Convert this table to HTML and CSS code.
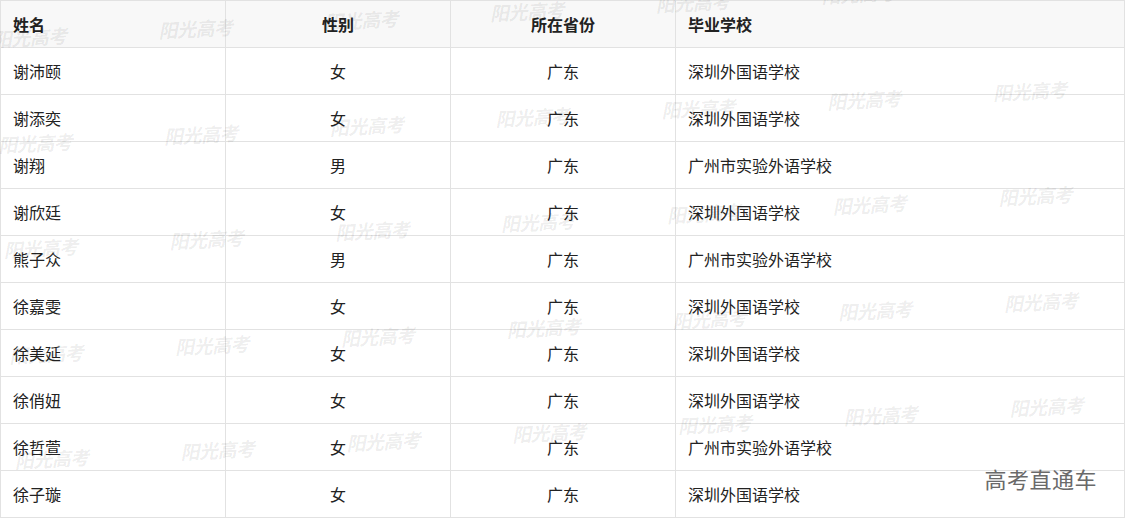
FILE: index.html
```html
<!DOCTYPE html>
<html lang="zh-CN">
<head>
<meta charset="utf-8">
<title>名单</title>
<link rel="stylesheet" href="styles.css">
</head>
<body>
<div class="page">
  <table class="roster">
    <colgroup>
      <col class="c-name">
      <col class="c-sex">
      <col class="c-prov">
      <col class="c-school">
    </colgroup>
    <thead>
      <tr><th class="left">姓名</th><th>性别</th><th>所在省份</th><th class="left">毕业学校</th></tr>
    </thead>
    <tbody>
      <tr><td class="left">谢沛颐</td><td>女</td><td>广东</td><td class="left">深圳外国语学校</td></tr>
      <tr><td class="left">谢添奕</td><td>女</td><td>广东</td><td class="left">深圳外国语学校</td></tr>
      <tr><td class="left">谢翔</td><td>男</td><td>广东</td><td class="left">广州市实验外语学校</td></tr>
      <tr><td class="left">谢欣廷</td><td>女</td><td>广东</td><td class="left">深圳外国语学校</td></tr>
      <tr><td class="left">熊子众</td><td>男</td><td>广东</td><td class="left">广州市实验外语学校</td></tr>
      <tr><td class="left">徐嘉雯</td><td>女</td><td>广东</td><td class="left">深圳外国语学校</td></tr>
      <tr><td class="left">徐美延</td><td>女</td><td>广东</td><td class="left">深圳外国语学校</td></tr>
      <tr><td class="left">徐俏妞</td><td>女</td><td>广东</td><td class="left">深圳外国语学校</td></tr>
      <tr><td class="left">徐哲萱</td><td>女</td><td>广东</td><td class="left">广州市实验外语学校</td></tr>
      <tr><td class="left">徐子璇</td><td>女</td><td>广东</td><td class="left">深圳外国语学校</td></tr>
    </tbody>
  </table>

  <div class="watermarks" aria-hidden="true">
    <span>阳光高考</span><span>阳光高考</span><span>阳光高考</span><span>阳光高考</span><span>阳光高考</span><span>阳光高考</span><span>阳光高考</span>
    <span>阳光高考</span><span>阳光高考</span><span>阳光高考</span><span>阳光高考</span><span>阳光高考</span><span>阳光高考</span><span>阳光高考</span>
    <span>阳光高考</span><span>阳光高考</span><span>阳光高考</span><span>阳光高考</span><span>阳光高考</span><span>阳光高考</span><span>阳光高考</span>
    <span>阳光高考</span><span>阳光高考</span><span>阳光高考</span><span>阳光高考</span><span>阳光高考</span><span>阳光高考</span><span>阳光高考</span>
    <span>阳光高考</span><span>阳光高考</span><span>阳光高考</span><span>阳光高考</span><span>阳光高考</span><span>阳光高考</span><span>阳光高考</span>
  </div>

  <div class="brand">高考直通车</div>
</div>
</body>
</html>
```

FILE: styles.css
```css
html, body {
  margin: 0;
  padding: 0;
  background: #ffffff;
}

.page {
  position: relative;
  width: 1125px;
  height: 518px;
  overflow: hidden;
  font-family: "Noto Sans CJK SC", "Noto Sans", sans-serif;
}

.roster {
  border-collapse: collapse;
  table-layout: fixed;
  width: 1124px;
  font-size: 16px;
  color: #222;
}

.c-name, .c-sex, .c-prov { width: 225px; }
.c-school { width: 449px; }

.roster th,
.roster td {
  border: 1px solid #e2e2e2;
  height: 47px;
  padding: 0 12px;
  box-sizing: border-box;
  text-align: center;
  vertical-align: middle;
  white-space: nowrap;
  line-height: 20px;
}

.roster th {
  background: #f8f8f8;
  font-weight: bold;
  color: #222;
}

.roster .left { text-align: left; }

.watermarks {
  position: absolute;
  left: -8px;
  top: 28px;
  display: grid;
  grid-template-columns: repeat(7, 166px);
  grid-auto-rows: 105.5px;
  transform: rotate(-3deg);
  transform-origin: 0 0;
  pointer-events: none;
}

.watermarks span {
  display: block;
  font-size: 19px;
  line-height: 22px;
  font-weight: bold;
  font-style: italic;
  color: rgba(0, 0, 0, 0.08);
  white-space: nowrap;
  letter-spacing: -0.5px;
}

.brand {
  position: absolute;
  right: 28px;
  top: 465px;
  font-size: 22px;
  line-height: 26px;
  color: #6a6a6a;
  letter-spacing: 0.5px;
}
```
